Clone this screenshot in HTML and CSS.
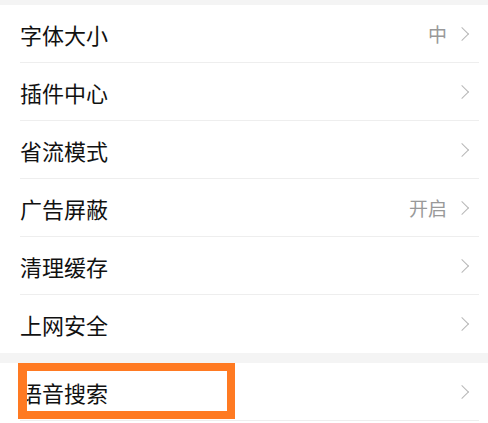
FILE: index.html
```html
<!doctype html>
<html lang="zh">
<head>
    <meta charset="UTF-8">
    <meta name="viewport" content="width=device-width, initial-scale=1.0">
    <title>设置</title>
    <link rel="stylesheet" href="styles.css">
</head>
<body>
<div class="gap top"></div>
<ul class="group">
    <li class="item"><div class="item-inner"><span class="label">字体大小</span><span class="value">中</span><span class="arrow"></span></div></li>
    <li class="item"><div class="item-inner"><span class="label">插件中心</span><span class="arrow"></span></div></li>
    <li class="item"><div class="item-inner"><span class="label">省流模式</span><span class="arrow"></span></div></li>
    <li class="item"><div class="item-inner"><span class="label">广告屏蔽</span><span class="value">开启</span><span class="arrow"></span></div></li>
    <li class="item"><div class="item-inner"><span class="label">清理缓存</span><span class="arrow"></span></div></li>
    <li class="item"><div class="item-inner"><span class="label">上网安全</span><span class="arrow"></span></div></li>
</ul>
<div class="gap"></div>
<ul class="group">
    <li class="item highlighted">
        <div class="item-inner"><span class="label">语音搜索</span><span class="arrow"></span></div>
        <div class="mark"></div>
    </li>
</ul>
</body>
</html>
```

FILE: styles.css
```css
body {
    margin: 0;
    background: #ffffff;
    font-family: "Noto Sans CJK SC", "Noto Sans", sans-serif;
}
.gap {
    height: 10px;
    background: #f4f4f4;
}
.gap.top {
    height: 5px;
}
.group {
    list-style: none;
    margin: 0;
    padding: 0;
    background: #ffffff;
}
.item {
    padding-left: 20px;
    position: relative;
}
.item-inner {
    display: flex;
    align-items: center;
    height: 57px;
    margin-right: 9px;
    padding-right: 9px;
    border-bottom: 1px solid #eeeeee;
}
.group:first-of-type .item:last-child .item-inner {
    border-bottom: none;
    height: 58px;
}
.label {
    flex: 1;
    font-size: 22px;
    color: #111111;
}
.value {
    font-size: 19px;
    color: #999999;
    margin-right: 14px;
}
.arrow {
    width: 9px;
    height: 9px;
    border-top: 1.5px solid #b8b8b8;
    border-right: 1.5px solid #b8b8b8;
    transform: translateX(-4px) rotate(45deg);
    margin-right: -1px;
}
.mark {
    position: absolute;
    left: 18px;
    top: 0;
    width: 200px;
    height: 40px;
    border-style: solid;
    border-color: #ff7a22;
    border-width: 8px 8px 8px 9px;
}
```
